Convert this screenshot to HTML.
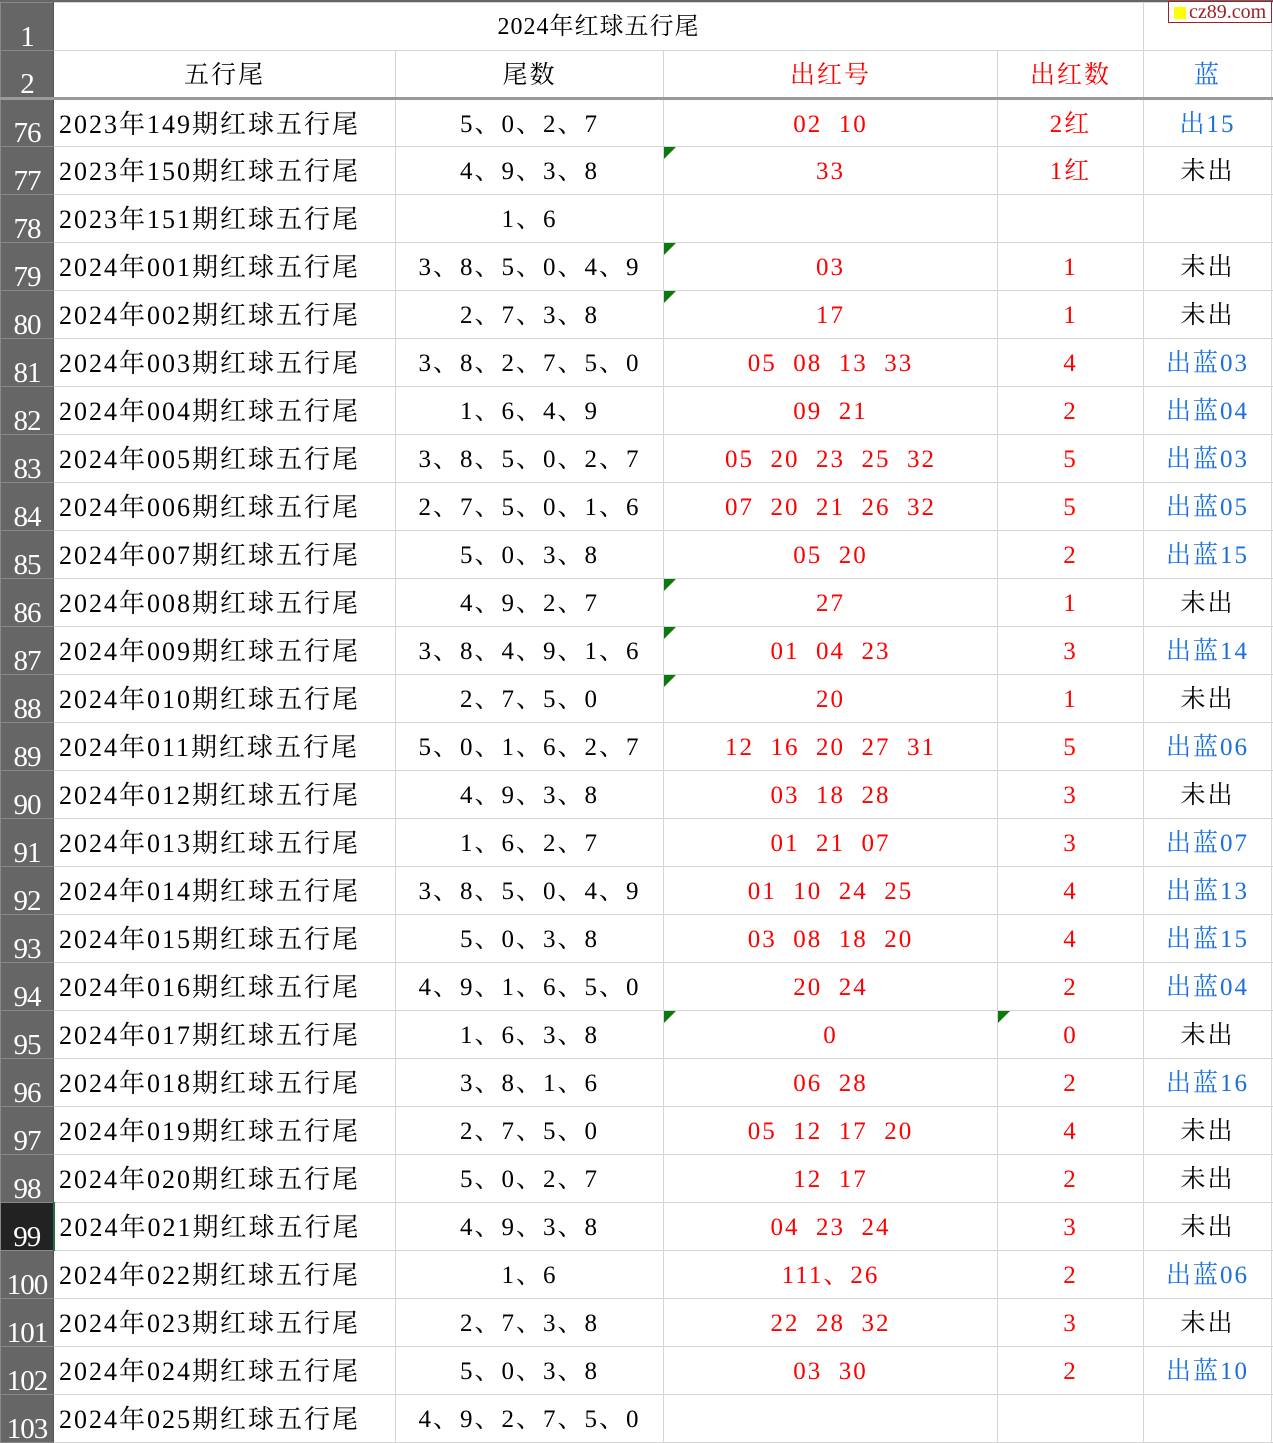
<!DOCTYPE html>
<html><head><meta charset="utf-8"><style>
body{margin:0;width:1273px;height:1439px;overflow:hidden;background:#fff;font-family:"Liberation Serif","Noto Serif CJK SC",serif;position:relative}
table{position:absolute;left:0;top:2px;border-collapse:collapse;table-layout:fixed;width:1281px}
td{height:48px;box-sizing:border-box;border:1px solid #d4d4d4;padding:4px 0 0 0;text-align:center;font-size:25px;line-height:42px;letter-spacing:2px;white-space:pre;position:relative;vertical-align:top;color:#000;overflow:hidden}
td.h{background:#666;color:#fff;border-color:#888;border-right:1px solid #555;vertical-align:bottom;padding:0;font-size:29px;letter-spacing:-1px;line-height:26px;}
td.h.s{background:#222;border-right:2px solid #217346}
td.a{text-align:left;padding-left:5px;font-size:26px;}
.r{color:#f00}.b{color:#1a6fe0}
tr.hd td{border-bottom:3px solid #9a9a9a}
.t::before{content:"";position:absolute;left:0;top:0;border-top:12px solid #0a7a0a;border-right:12px solid transparent;}
#top{position:absolute;left:0;top:0;width:1273px;height:2px;background:#666}
#logo{position:absolute;left:1168px;top:1px;width:102px;height:20px;border:1px solid #a0202a;background:#fff;font-size:20px;line-height:20px;color:#a0202a;}
#logo i{display:inline-block;width:12px;height:12px;background:#ffff00;margin:0 3px 0 5px;vertical-align:-1px}
</style></head><body>
<div id="top"></div>
<table>
<colgroup><col style="width:53px"><col style="width:342px"><col style="width:268px"><col style="width:334px"><col style="width:146px"><col style="width:128px"><col style="width:10px"></colgroup>
<tr><td class="h">1</td><td colspan="4" style="font-size:24px;letter-spacing:1px;padding-top:3px">2024年红球五行尾</td><td></td><td></td></tr>
<tr class="hd"><td class="h">2</td><td>五行尾</td><td>尾数</td><td class="r">出红号</td><td class="r">出红数</td><td class="b">蓝</td><td></td></tr>
<tr><td class="h">76</td><td class="a">2023年149期红球五行尾</td><td>5、0、2、7</td><td class="r">02  10</td><td class="r">2红</td><td class="b">出15</td><td></td></tr>
<tr><td class="h">77</td><td class="a">2023年150期红球五行尾</td><td>4、9、3、8</td><td class="r t">33</td><td class="r">1红</td><td>未出</td><td></td></tr>
<tr><td class="h">78</td><td class="a">2023年151期红球五行尾</td><td>1、6</td><td></td><td></td><td></td><td></td></tr>
<tr><td class="h">79</td><td class="a">2024年001期红球五行尾</td><td>3、8、5、0、4、9</td><td class="r t">03</td><td class="r">1</td><td>未出</td><td></td></tr>
<tr><td class="h">80</td><td class="a">2024年002期红球五行尾</td><td>2、7、3、8</td><td class="r t">17</td><td class="r">1</td><td>未出</td><td></td></tr>
<tr><td class="h">81</td><td class="a">2024年003期红球五行尾</td><td>3、8、2、7、5、0</td><td class="r">05  08  13  33</td><td class="r">4</td><td class="b">出蓝03</td><td></td></tr>
<tr><td class="h">82</td><td class="a">2024年004期红球五行尾</td><td>1、6、4、9</td><td class="r">09  21</td><td class="r">2</td><td class="b">出蓝04</td><td></td></tr>
<tr><td class="h">83</td><td class="a">2024年005期红球五行尾</td><td>3、8、5、0、2、7</td><td class="r">05  20  23  25  32</td><td class="r">5</td><td class="b">出蓝03</td><td></td></tr>
<tr><td class="h">84</td><td class="a">2024年006期红球五行尾</td><td>2、7、5、0、1、6</td><td class="r">07  20  21  26  32</td><td class="r">5</td><td class="b">出蓝05</td><td></td></tr>
<tr><td class="h">85</td><td class="a">2024年007期红球五行尾</td><td>5、0、3、8</td><td class="r">05  20</td><td class="r">2</td><td class="b">出蓝15</td><td></td></tr>
<tr><td class="h">86</td><td class="a">2024年008期红球五行尾</td><td>4、9、2、7</td><td class="r t">27</td><td class="r">1</td><td>未出</td><td></td></tr>
<tr><td class="h">87</td><td class="a">2024年009期红球五行尾</td><td>3、8、4、9、1、6</td><td class="r t">01  04  23</td><td class="r">3</td><td class="b">出蓝14</td><td></td></tr>
<tr><td class="h">88</td><td class="a">2024年010期红球五行尾</td><td>2、7、5、0</td><td class="r t">20</td><td class="r">1</td><td>未出</td><td></td></tr>
<tr><td class="h">89</td><td class="a">2024年011期红球五行尾</td><td>5、0、1、6、2、7</td><td class="r">12  16  20  27  31</td><td class="r">5</td><td class="b">出蓝06</td><td></td></tr>
<tr><td class="h">90</td><td class="a">2024年012期红球五行尾</td><td>4、9、3、8</td><td class="r">03  18  28</td><td class="r">3</td><td>未出</td><td></td></tr>
<tr><td class="h">91</td><td class="a">2024年013期红球五行尾</td><td>1、6、2、7</td><td class="r">01  21  07</td><td class="r">3</td><td class="b">出蓝07</td><td></td></tr>
<tr><td class="h">92</td><td class="a">2024年014期红球五行尾</td><td>3、8、5、0、4、9</td><td class="r">01  10  24  25</td><td class="r">4</td><td class="b">出蓝13</td><td></td></tr>
<tr><td class="h">93</td><td class="a">2024年015期红球五行尾</td><td>5、0、3、8</td><td class="r">03  08  18  20</td><td class="r">4</td><td class="b">出蓝15</td><td></td></tr>
<tr><td class="h">94</td><td class="a">2024年016期红球五行尾</td><td>4、9、1、6、5、0</td><td class="r">20  24</td><td class="r">2</td><td class="b">出蓝04</td><td></td></tr>
<tr><td class="h">95</td><td class="a">2024年017期红球五行尾</td><td>1、6、3、8</td><td class="r t">0</td><td class="r t">0</td><td>未出</td><td></td></tr>
<tr><td class="h">96</td><td class="a">2024年018期红球五行尾</td><td>3、8、1、6</td><td class="r">06  28</td><td class="r">2</td><td class="b">出蓝16</td><td></td></tr>
<tr><td class="h">97</td><td class="a">2024年019期红球五行尾</td><td>2、7、5、0</td><td class="r">05  12  17  20</td><td class="r">4</td><td>未出</td><td></td></tr>
<tr><td class="h">98</td><td class="a">2024年020期红球五行尾</td><td>5、0、2、7</td><td class="r">12  17</td><td class="r">2</td><td>未出</td><td></td></tr>
<tr><td class="h s">99</td><td class="a">2024年021期红球五行尾</td><td>4、9、3、8</td><td class="r">04  23  24</td><td class="r">3</td><td>未出</td><td></td></tr>
<tr><td class="h">100</td><td class="a">2024年022期红球五行尾</td><td>1、6</td><td class="r">111、26</td><td class="r">2</td><td class="b">出蓝06</td><td></td></tr>
<tr><td class="h">101</td><td class="a">2024年023期红球五行尾</td><td>2、7、3、8</td><td class="r">22  28  32</td><td class="r">3</td><td>未出</td><td></td></tr>
<tr><td class="h">102</td><td class="a">2024年024期红球五行尾</td><td>5、0、3、8</td><td class="r">03  30</td><td class="r">2</td><td class="b">出蓝10</td><td></td></tr>
<tr><td class="h">103</td><td class="a">2024年025期红球五行尾</td><td>4、9、2、7、5、0</td><td></td><td></td><td></td><td></td></tr>
</table>
<div id="logo"><i></i>cz89.com</div>
</body></html>
